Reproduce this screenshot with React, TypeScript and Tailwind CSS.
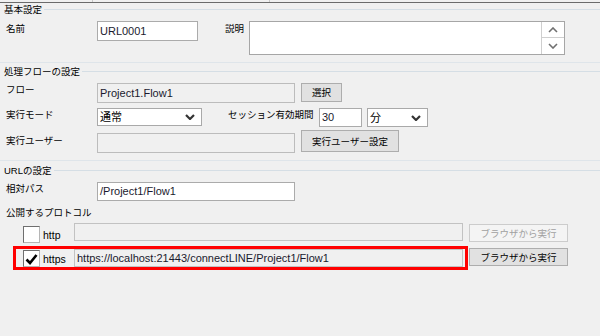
import React from 'react';

const font = "font-['Liberation_Sans','Noto_Sans_CJK_JP',sans-serif]";
const jp = 'text-[9.5px] leading-[13px] text-black';

function Header({ title }: { title: string }) {
  return (
    <div className={`flex h-[13px] items-center pl-[4px] ${jp}`}>
      <span>{title}</span>
      <div className="ml-[2px] h-px flex-1 bg-[#d5dee5]" />
    </div>
  );
}

function Separator() {
  return <div className="h-px bg-[#dfe5ea]" />;
}

function Label({ text, className = '' }: { text: string; className?: string }) {
  return <div className={`w-[97px] shrink-0 pl-[6px] ${jp} ${className}`}>{text}</div>;
}

function Chevron({ up = false, className = '' }: { up?: boolean; className?: string }) {
  return (
    <svg width="10" height="6" viewBox="0 0 10 6" className={className}>
      <polyline
        points={up ? '1,5 5,1 9,5' : '1,1 5,5 9,1'}
        fill="none"
        stroke="currentColor"
        strokeWidth="1.6"
      />
    </svg>
  );
}

function Select({ value, className }: { value: string; className: string }) {
  return (
    <div
      className={`flex items-center justify-between border border-[#a9a9a9] bg-white pl-[2px] pr-[6px] text-[11px] leading-[14px] text-black ${className}`}
    >
      <span>{value}</span>
      <Chevron className="text-[#333] [&>polyline]:stroke-[2.2]" />
    </div>
  );
}

export default function App() {
  return (
    <div className={`h-[336px] w-[600px] overflow-hidden bg-[#f0f0f0] ${font}`}>
      {/* top edge */}
      <div className="flex h-[2px]">
        <div className="w-[92px]" />
        <div className="w-px bg-[#c8c8c8]" />
        <div className="w-[176px]" />
        <div className="w-px bg-[#c8c8c8]" />
      </div>
      <div className="h-px bg-[#6b6b6b]" />

      <Header title="基本設定" />
      <div className="mt-[5px] flex h-[34px]">
        <Label text="名前" className="pt-px" />
        <div className="h-[20px] w-[101px] border border-[#ababab] bg-white pl-[2px] text-[11px] leading-[18px] text-[#1a1a2e]">
          URL0001
        </div>
        <div className={`w-[51px] shrink-0 pl-[27px] pt-px ${jp}`}>説明</div>
        <div className="flex h-[34px] w-[316px] border border-[#a6a6a6] bg-white">
          <div className="flex-1" />
          <div className="flex w-[23px] flex-col">
            <div className="flex h-[16px] items-center justify-center border border-t-0 border-r-0 border-[#cfcfcf] text-[#707070]">
              <Chevron up />
            </div>
            <div className="flex flex-1 items-center justify-center border-l border-[#cfcfcf] text-[#707070]">
              <Chevron />
            </div>
          </div>
        </div>
      </div>

      <div className="mt-[7px]">
        <Separator />
      </div>
      <div className="mt-[2px]">
        <Header title="処理フローの設定" />
      </div>

      <div className="mt-[5px] flex h-[20px]">
        <Label text="フロー" />
        <div className="h-[20px] w-[198px] border border-[#bcbcbc] bg-[#f0f0f0] pl-[2px] text-[11px] leading-[18px] text-[#1a1a2e]">
          Project1.Flow1
        </div>
        <div className={`ml-[6px] flex h-[19px] w-[41px] items-center justify-center border border-[#adadad] bg-[#e1e1e1] ${jp}`}>
          選択
        </div>
      </div>

      <div className="mt-[5px] flex h-[19px]">
        <Label text="実行モード" />
        <Select value="通常" className="h-[18px] w-[105px]" />
        <div className={`w-[117px] shrink-0 pl-[26px] ${jp}`}>セッション有効期間</div>
        <div className="h-[19px] w-[43px] border border-[#ababab] bg-white pl-[2px] text-[11px] leading-[17px] text-[#1a1a2e]">
          30
        </div>
        <Select value="分" className="ml-[5px] h-[19px] w-[61px]" />
      </div>

      <div className="mt-[3px] flex h-[23px]">
        <Label text="実行ユーザー" className="pt-[4px]" />
        <div className="mt-[3px] h-[20px] w-[198px] border border-[#bcbcbc] bg-[#f0f0f0]" />
        <div className={`ml-[6px] flex h-[22px] w-[98px] items-center justify-center border border-[#adadad] bg-[#e1e1e1] ${jp}`}>
          実行ユーザー設定
        </div>
      </div>

      <div className="mt-[7px]">
        <Separator />
      </div>
      <div className="mt-[3px]">
        <Header title="URLの設定" />
      </div>

      <div className="mt-[5px] flex h-[19px]">
        <Label text="相対パス" />
        <div className="h-[19px] w-[198px] border border-[#ababab] bg-white pl-[2px] text-[11px] leading-[17px] text-[#1a1a2e]">
          /Project1/Flow1
        </div>
      </div>

      <div className={`mt-[5px] pl-[6px] ${jp}`}>公開するプロトコル</div>

      <div className="mt-[4px] flex h-[20px]">
        <div className="w-[23px] shrink-0" />
        <div className="mt-[3px] h-[17px] w-[17px] border border-[#6f6f6f] border-r-[#b5b5b5] border-b-[#b5b5b5] bg-white" />
        <div className="ml-[3px] w-[31px] pt-[6px] text-[10.5px] leading-[13px] text-black">http</div>
        <div className="h-[18px] w-[389px] border border-[#c2c2c2] bg-[#f0f0f0]" />
        <div className="ml-[6px] mt-px flex h-[18px] w-[99px] items-center justify-center border border-[#cccccc] bg-[#f4f4f4] text-[9.5px] leading-[13px] text-[#a0a0a0]">
          ブラウザから実行
        </div>
      </div>

      <div className="relative mt-[5px] flex h-[20px]">
        <div className="w-[23px] shrink-0" />
        <div className="mt-[2px] flex h-[17px] w-[17px] items-center justify-center border border-[#6f6f6f] border-r-[#b5b5b5] border-b-[#b5b5b5] bg-white">
          <svg width="13" height="12" viewBox="0 0 13 12">
            <path d="M1.5 6.5 L5 10 L11.5 2" fill="none" stroke="#000" strokeWidth="2.6" />
          </svg>
        </div>
        <div className="ml-[3px] w-[31px] pt-[5px] text-[10.5px] leading-[13px] text-black">https</div>
        <div className="mt-px h-[18px] w-[389px] border border-[#c2c2c2] bg-[#f0f0f0] pl-[2px] text-[11px] leading-[16px] text-[#1a1a2e]">
          https://localhost:21443/connectLINE/Project1/Flow1
        </div>
        <div className={`ml-[6px] flex h-[18px] w-[99px] items-center justify-center border border-[#adadad] bg-[#e1e1e1] ${jp}`}>
          ブラウザから実行
        </div>
        <div className="pointer-events-none absolute left-[13px] top-[-2px] h-[24px] w-[455px] border-[3px] border-[#ff0000]" />
      </div>
    </div>
  );
}
